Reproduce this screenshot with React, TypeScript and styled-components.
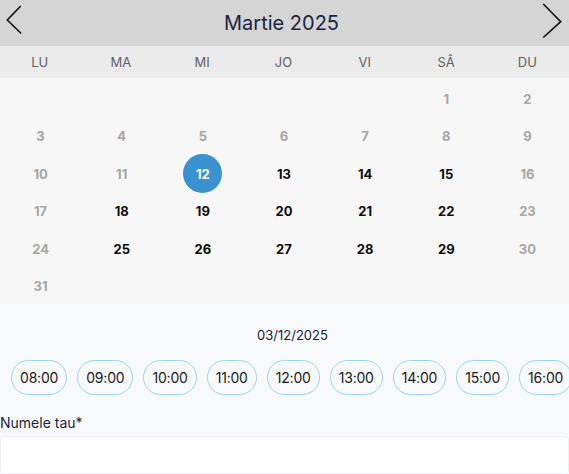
import React from "react";
import styled, { createGlobalStyle, css } from "styled-components";

const GlobalStyle = createGlobalStyle`
  html, body { margin: 0; padding: 0; }
  body {
    font-family: Inter, "Noto Sans", Arial, sans-serif;
    background: #f8f9fb;
    overflow: hidden;
  }
  * { box-sizing: border-box; }
`;

const Page = styled.div`
  width: 569px;
  display: flex;
  flex-direction: column;
`;

const Header = styled.div`
  height: 46px;
  background: #d5d5d5;
  display: flex;
  align-items: center;
`;

const NavButton = styled.button<{ $side: "left" | "right" }>`
  border: 0;
  background: transparent;
  padding: 0;
  display: flex;
  cursor: pointer;
  ${(p) =>
    p.$side === "left"
      ? css`
          margin-left: 6px;
          margin-top: -6px;
        `
      : css`
          margin-right: 6px;
          margin-top: -4px;
        `}
`;

const Title = styled.h1`
  flex: 1;
  margin: 0;
  text-align: center;
  font-size: 20px;
  font-weight: 400;
  color: #1b2440;
  letter-spacing: 0;
`;

const WeekRow = styled.div`
  height: 32px;
  background: #ebebeb;
  display: grid;
  grid-template-columns: repeat(7, 1fr);
  align-items: center;
`;

const WeekDay = styled.div`
  text-align: center;
  font-size: 13px;
  color: #626262;
  margin-left: -2px;
`;

const DaysGrid = styled.div`
  background: #f7f7f7;
  display: grid;
  grid-template-columns: repeat(7, 1fr);
  grid-auto-rows: 37.5px;
  padding-top: 2px;
  padding-right: 1px;
`;

type DayKind = "muted" | "active" | "selected" | "empty";

const DayCell = styled.div`
  display: flex;
  align-items: center;
  justify-content: center;
`;

const DayNum = styled.span<{ $kind: DayKind }>`
  font-size: 13px;
  font-weight: 700;
  display: flex;
  align-items: center;
  justify-content: center;
  ${(p) =>
    p.$kind === "muted" &&
    css`
      color: #a6a6a6;
    `}
  ${(p) =>
    p.$kind === "active" &&
    css`
      color: #0d0d0d;
    `}
  ${(p) =>
    p.$kind === "selected" &&
    css`
      color: #ffffff;
      background: #3a93d0;
      width: 39px;
      height: 39px;
      border-radius: 50%;
    `}
`;

const Lower = styled.div`
  display: flex;
  flex-direction: column;
  background: #f8f9fb;
`;

const DateLabel = styled.div`
  text-align: center;
  font-size: 13px;
  color: #1b2033;
  padding-left: 16px;
  margin-top: 22px;
  height: 16px;
  line-height: 16px;
`;

const SlotRow = styled.div`
  display: flex;
  gap: 10px;
  padding-left: 11px;
  margin-top: 17px;
  overflow: hidden;
`;

const Pill = styled.button`
  flex: none;
  height: 35px;
  padding: 0 8px;
  border: 1.5px solid #9ad5f0;
  border-radius: 18px;
  background: #f8f9fb;
  font-family: inherit;
  font-size: 14px;
  letter-spacing: -0.2px;
  color: #1a1a1a;
  cursor: pointer;
`;

const FieldLabel = styled.label`
  display: block;
  margin-top: 19px;
  font-size: 14px;
  color: #1b2440;
  line-height: 17px;
`;

const Input = styled.input`
  display: block;
  margin-top: 5px;
  width: 100%;
  height: 38px;
  border: 1px solid #eef0f4;
  border-radius: 4px;
  background: #ffffff;
  font-family: inherit;
  font-size: 14px;
  outline: none;
`;

const weekDays = ["LU", "MA", "MI", "JO", "VI", "SÂ", "DU"];

const activeDays = new Set([13, 14, 15, 18, 19, 20, 21, 22, 25, 26, 27, 28, 29]);

const cells: { n: number | null; kind: DayKind }[] = [];
for (let i = 0; i < 5; i++) cells.push({ n: null, kind: "empty" });
for (let d = 1; d <= 31; d++) {
  let kind: DayKind = "muted";
  if (d === 12) kind = "selected";
  else if (activeDays.has(d)) kind = "active";
  cells.push({ n: d, kind });
}

const slots = ["08:00", "09:00", "10:00", "11:00", "12:00", "13:00", "14:00", "15:00", "16:00"];

export default function App() {
  return (
    <Page>
      <GlobalStyle />
      <Header>
        <NavButton $side="left" aria-label="Luna anterioară">
          <svg width="16" height="30" viewBox="0 0 16 30" fill="none">
            <path d="M14.7 1 L1.3 15 L15.2 28.5" stroke="#111" strokeWidth="1.6" />
          </svg>
        </NavButton>
        <Title>Martie 2025</Title>
        <NavButton $side="right" aria-label="Luna următoare">
          <svg width="22" height="38" viewBox="0 0 22 38" fill="none">
            <path d="M2.3 2 L19.7 19.7 L2.3 35.5" stroke="#111" strokeWidth="1.6" />
          </svg>
        </NavButton>
      </Header>
      <WeekRow>
        {weekDays.map((w) => (
          <WeekDay key={w}>{w}</WeekDay>
        ))}
      </WeekRow>
      <DaysGrid>
        {cells.map((c, i) => (
          <DayCell key={i}>{c.n !== null && <DayNum $kind={c.kind}>{c.n}</DayNum>}</DayCell>
        ))}
      </DaysGrid>
      <Lower>
        <DateLabel>03/12/2025</DateLabel>
        <SlotRow>
          {slots.map((s) => (
            <Pill key={s}>{s}</Pill>
          ))}
        </SlotRow>
        <FieldLabel htmlFor="name">Numele tau*</FieldLabel>
        <Input id="name" />
      </Lower>
    </Page>
  );
}
